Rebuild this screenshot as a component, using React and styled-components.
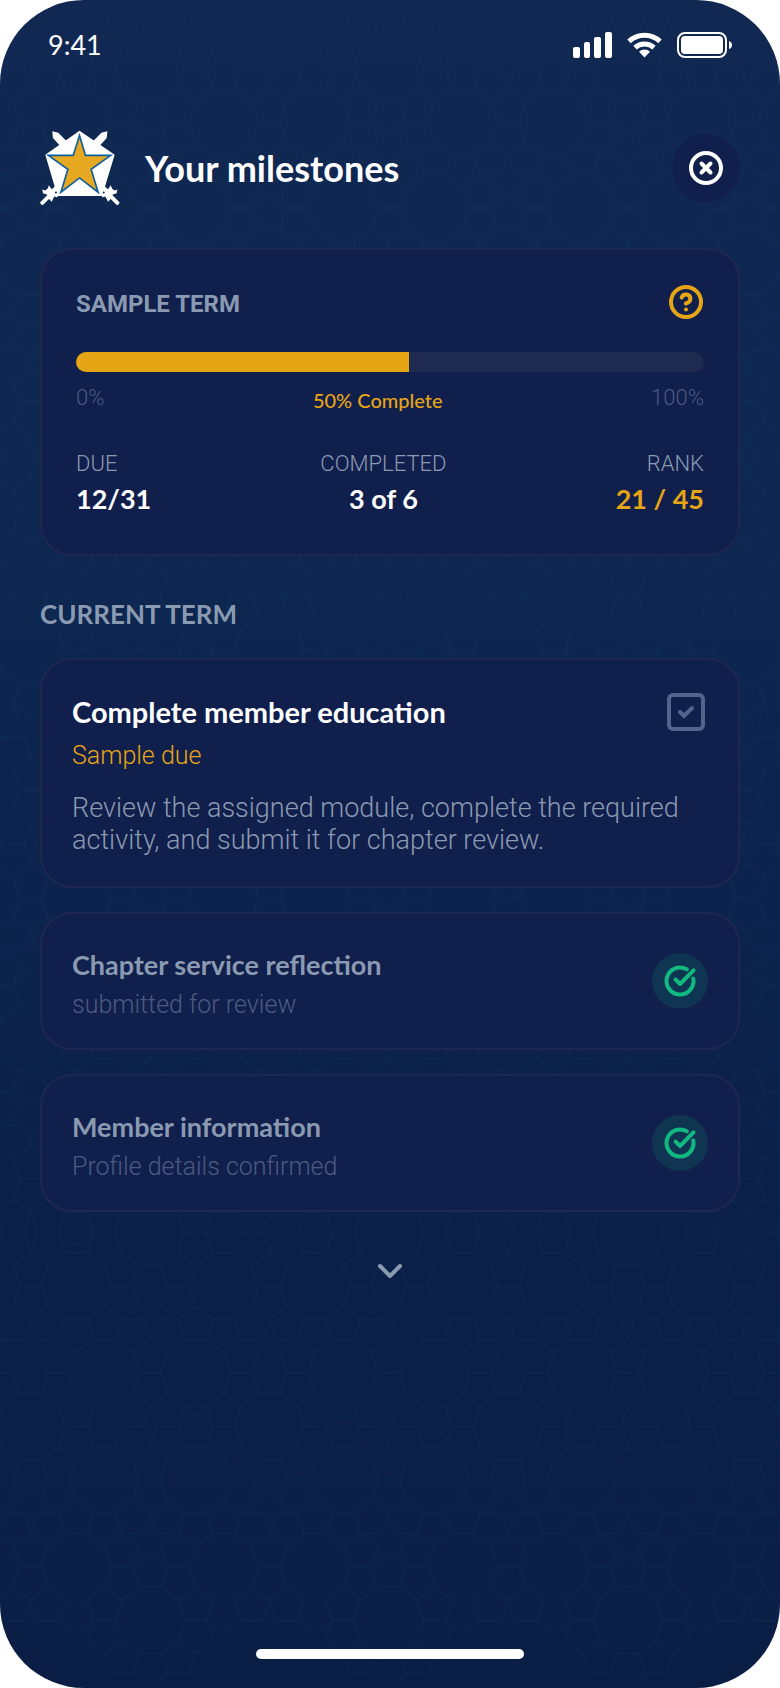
import React from 'react'
import styled, { createGlobalStyle } from 'styled-components'
import { CircleX, CircleHelp } from 'lucide-react'

const GlobalStyle = createGlobalStyle`
  * {
    box-sizing: border-box;
  }
  body {
    margin: 0;
    background-color: #ffffff;
  }
  h1, h2, h3, p, dl, dd, ul {
    margin: 0;
    padding: 0;
  }
`

const heading = "Lato, 'Liberation Sans', sans-serif"
const body = "Roboto, 'Liberation Sans', sans-serif"

const Screen = styled.div`
  position: relative;
  display: flex;
  flex-direction: column;
  min-height: 100vh;
  overflow: hidden;
  border-radius: 84px;
  background: linear-gradient(#102852, #0d2750 35%, #0b2049 72%, #0a1e45);
  color: #ffffff;
  font-family: ${heading};
`

const Backdrop = styled.svg`
  position: absolute;
  inset: 0;
  width: 100%;
  height: 100%;
`

const Content = styled.div`
  position: relative;
  flex: 1;
  display: flex;
  flex-direction: column;
`

const StatusBar = styled.div`
  display: flex;
  align-items: center;
  justify-content: space-between;
  height: 90px;
  padding: 0 48px;
`

const Time = styled.span`
  font-size: 27px;
  line-height: 32px;
`

const StatusIcons = styled.div`
  display: flex;
  align-items: center;
  gap: 15px;
`

const Header = styled.header`
  display: flex;
  align-items: center;
  gap: 25px;
  padding: 40px 40px 42px;
`

const Title = styled.h1`
  flex: 1;
  font-size: 36px;
  line-height: 48px;
  font-weight: 700;
`

const CloseButton = styled.button`
  display: flex;
  align-items: center;
  justify-content: center;
  width: 68px;
  height: 68px;
  padding: 0;
  border: none;
  border-radius: 50%;
  background-color: #111f4d;
  color: #ffffff;
`

const IconButton = styled.button`
  display: flex;
  padding: 0;
  border: none;
  background: none;
  color: ${props => props.$color};
`

const Main = styled.main`
  display: flex;
  flex-direction: column;
  padding: 0 40px;
`

const Card = styled.section`
  border: 2px solid #1e284f;
  border-radius: 32px;
  background-color: #111f4d;
`

const TermCard = styled(Card)`
  padding: 34px 34px 36px;
`

const TermHead = styled.div`
  display: flex;
  align-items: flex-start;
  justify-content: space-between;
`

const TermName = styled.h2`
  font-family: ${body};
  font-size: 24px;
  line-height: 40px;
  font-weight: 700;
  color: #8a9ab1;
`

const Track = styled.div`
  height: 20px;
  margin-top: 28px;
  overflow: hidden;
  border-radius: 10px;
  background-color: #1f2a50;
`

const Fill = styled.div`
  height: 100%;
  background-color: #e6a515;
`

const Scale = styled.div`
  display: flex;
  justify-content: space-between;
  margin-top: 12px;
  font-family: ${body};
  font-size: 22px;
  line-height: 28px;
  font-weight: 300;
  color: #4b5b80;
`

const Percent = styled.strong`
  padding-top: 2px;
  font-family: ${heading};
  font-size: 20px;
  font-weight: 500;
  color: #e6a515;
`

const Stats = styled.dl`
  display: flex;
  justify-content: space-between;
  margin-top: 34px;
`

const Stat = styled.div`
  display: flex;
  flex-direction: column;
  text-align: ${props => props.$align};
`

const StatLabel = styled.dt`
  font-family: ${body};
  font-size: 22px;
  line-height: 32px;
  font-weight: 300;
  color: #8a9ab1;
`

const StatValue = styled.dd`
  font-size: 27px;
  line-height: 38px;
  font-weight: 700;
  color: ${props => props.$color || '#ffffff'};
`

const SectionTitle = styled.h2`
  margin: 41px 0 27px;
  font-size: 26px;
  line-height: 34px;
  font-weight: 700;
  color: #8a9ab1;
`

const List = styled.ul`
  display: flex;
  flex-direction: column;
  gap: 24px;
  list-style: none;
`

const CurrentCard = styled(Card)`
  padding: 33px 33px 30px 30px;
`

const DoneCard = styled(Card)`
  display: flex;
  align-items: center;
  justify-content: space-between;
  height: 138px;
  padding: 0 30px;
`

const DoneText = styled.div`
  padding-top: 4px;
`

const CardHead = styled.div`
  display: flex;
  align-items: flex-start;
  justify-content: space-between;
  margin-bottom: 7px;
`

const TaskTitle = styled.h3`
  font-size: ${props => (props.$done ? 27 : 29)}px;
  line-height: ${props => (props.$done ? 44 : 38)}px;
  font-weight: 700;
  color: ${props => (props.$done ? '#8a9ab1' : '#ffffff')};
`

const TaskNote = styled.p`
  font-family: ${body};
  font-size: 25px;
  line-height: 36px;
  font-weight: 300;
  color: ${props => (props.$done ? '#4b5b80' : '#e6a515')};
`

const TaskText = styled.p`
  margin-top: 18px;
  font-family: ${body};
  font-size: 27px;
  line-height: 32px;
  font-weight: 300;
  color: #8a9ab1;
`

const Tick = styled.label`
  display: grid;
  place-items: center;
  svg {
    grid-area: 1 / 1;
    pointer-events: none;
  }
`

const TickBox = styled.input`
  grid-area: 1 / 1;
  appearance: none;
  width: 38px;
  height: 38px;
  margin: 0;
  border: 4px solid #53648a;
  border-radius: 6px;
`

const DoneBadge = styled.span`
  display: flex;
  align-items: center;
  justify-content: center;
  width: 56px;
  height: 56px;
  border-radius: 50%;
  background-color: #103552;
`

const MoreButton = styled(IconButton)`
  align-self: center;
  margin-top: 50px;
`

const HomeIndicator = styled.div`
  width: 268px;
  height: 10px;
  margin: auto auto 29px;
  border-radius: 5px;
  background-color: #ffffff;
`

// tiling: every decagon carries a ring of ten pentagons,
// neighbouring decagons are joined by one edge
const DIST = 91.25
const EDGE = DIST / 4.236
const TILE_W = DIST * 2.618
const STEP = DIST * Math.sin(Math.PI / 5)
const GAP = DIST * Math.sin((2 * Math.PI) / 5)
const SIDE = DIST * Math.cos(Math.PI / 5)

const ringPath = (() => {
  const r = EDGE * 1.618
  const mid = r * Math.cos(Math.PI / 10)
  const apex = mid + EDGE * 1.5388
  const shoulder = mid + EDGE * 0.9511
  const wing = EDGE * 0.809
  const at = (dist, side, angle) => {
    const x = dist * Math.cos(angle) - side * Math.sin(angle)
    const y = dist * Math.sin(angle) + side * Math.cos(angle)
    return `${x.toFixed(2)} ${y.toFixed(2)}`
  }
  let d = ''
  for (let i = 0; i < 10; i++) {
    const a = ((18 + 36 * i) * Math.PI) / 180
    const h = EDGE / 2
    d += `M${at(mid, -h, a)}L${at(mid, h, a)}L${at(shoulder, wing, a)}L${at(apex, 0, a)}L${at(shoulder, -wing, a)}`
  }
  return d
})()

const centers = (() => {
  const half = 2 * STEP + GAP
  const list = []
  for (let n = 0; n <= 8; n++) {
    const y = n * half
    const x = n % 2 ? TILE_W / 2 : 0
    list.push([x, y])
    if (n > 0) list.push([x - SIDE, y - STEP], [x + SIDE, y - STEP])
    if (n < 8) list.push([x - SIDE, y + STEP], [x + SIDE, y + STEP])
  }
  return list.flatMap(([x, y]) => [-1, 0, 1].map(k => [x + k * TILE_W, y]))
})()

const Pattern = () => (
  <Backdrop aria-hidden="true">
    <defs>
      <path id="ring" d={ringPath} />
      <pattern id="tiles" x="150" width={TILE_W} height="1700" patternUnits="userSpaceOnUse">
        <g fill="none" stroke="#11456c" strokeWidth="1.5">
          {centers.map(([x, y]) => (
            <use key={`${x} ${y}`} href="#ring" x={x} y={y + 68} />
          ))}
        </g>
      </pattern>
    </defs>
    <rect width="100%" height="100%" fill="url(#tiles)" opacity="0.15" />
  </Backdrop>
)

const Sword = props => (
  <g fill="#ffffff" {...props}>
    <path d="M52 33L70 38L96 64L78 80L54 54Z" />
    <path d="M22 209L31 212L38 206L42 196L50 208L62 198L72 226L66 232L58 230L50 246L43 238L36 224L24 220Z" />
    <path d="M22 249L46 225" stroke="#ffffff" strokeWidth="12" strokeLinecap="round" />
    <circle cx="63" cy="218" r="3" fill="#102852" />
  </g>
)

const Logo = () => (
  <svg width="80" height="76" viewBox="15 30 241 228" role="img" aria-label="Chapter crest">
    <path d="M134 32L240 104L212 196L204 228H66L58 196L31 104Z" fill="#ffffff" />
    <Sword />
    <Sword transform="translate(270 0) scale(-1 1)" />
    <path
      d="M134 46L152 106H228L169 148L190 217L134 174L78 217L99 148L40 106H115Z"
      fill="#e7a822"
      stroke="#0b5f9d"
      strokeWidth="5"
    />
  </svg>
)

const Signal = () => (
  <svg width="39" height="26" fill="#ffffff">
    <rect x="0" y="15" width="7" height="11" rx="2" />
    <rect x="11" y="10" width="6" height="16" rx="2" />
    <rect x="21" y="5" width="7" height="21" rx="2" />
    <rect x="32" y="0" width="7" height="26" rx="2" />
  </svg>
)

const Wifi = () => (
  <svg width="35" height="26" viewBox="0 0 35 26">
    <g fill="none" stroke="#ffffff" strokeWidth="5">
      <path d="M2 9.4A22.5 22.5 0 0 1 33 9.4" />
      <path d="M8 15.6A14 14 0 0 1 27 15.6" />
    </g>
    <path d="M17.5 25.5L12 19.8A8 8 0 0 1 23 19.8Z" fill="#ffffff" />
  </svg>
)

const Battery = () => (
  <svg width="55" height="26" fill="none">
    <rect x="1" y="1" width="48" height="24" rx="7" stroke="#ffffff" strokeWidth="2" />
    <rect x="4" y="4" width="42" height="18" rx="4" fill="#ffffff" />
    <path d="M52 9Q55 10 55 13T52 17Z" fill="#ffffff" />
  </svg>
)

const DoneIcon = () => (
  <svg
    width="32"
    height="32"
    viewBox="-16 -16 32 32"
    fill="none"
    stroke="#11b981"
    strokeWidth="4"
    strokeLinecap="round"
    strokeLinejoin="round"
    role="img"
    aria-label="Done"
  >
    <path d="M6.8 -11.7A13.5 13.5 0 1 0 13.3 -2.5" />
    <path d="M-4.3 -1.3L0 3L13.5 -10.7" />
  </svg>
)

const doneTasks = [
  { id: 1, title: 'Chapter service reflection', note: 'submitted for review' },
  { id: 2, title: 'Member information', note: 'Profile details confirmed' },
]

const progress = 53

const App = () => {
  return (
    <Screen>
      <GlobalStyle />
      <Pattern />
      <Content>
        <StatusBar>
          <Time>9:41</Time>
          <StatusIcons>
            <Signal />
            <Wifi />
            <Battery />
          </StatusIcons>
        </StatusBar>
        <Header>
          <Logo />
          <Title>Your milestones</Title>
          <CloseButton type="button" aria-label="Close">
            <CircleX size={36} strokeWidth={4} absoluteStrokeWidth />
          </CloseButton>
        </Header>
        <Main>
          <TermCard>
            <TermHead>
              <TermName>SAMPLE TERM</TermName>
              <IconButton type="button" aria-label="Help" $color="#e6a515">
                <CircleHelp size={36} strokeWidth={4} absoluteStrokeWidth />
              </IconButton>
            </TermHead>
            <Track>
              <Fill style={{ width: `${progress}%` }} />
            </Track>
            <Scale>
              <span>0%</span>
              <Percent>50% Complete</Percent>
              <span>100%</span>
            </Scale>
            <Stats>
              <Stat $align="left">
                <StatLabel>DUE</StatLabel>
                <StatValue>12/31</StatValue>
              </Stat>
              <Stat $align="center">
                <StatLabel>COMPLETED</StatLabel>
                <StatValue>3 of 6</StatValue>
              </Stat>
              <Stat $align="right">
                <StatLabel>RANK</StatLabel>
                <StatValue $color="#e6a515">21 / 45</StatValue>
              </Stat>
            </Stats>
          </TermCard>
          <SectionTitle>CURRENT TERM</SectionTitle>
          <List>
            <CurrentCard as="li">
              <CardHead>
                <TaskTitle>Complete member education</TaskTitle>
                <Tick>
                  <TickBox type="checkbox" aria-label="Complete member education" />
                  <svg width="20" height="20" viewBox="-10 -10 20 20" fill="none" stroke="#53648a" strokeWidth="4">
                    <path d="M-6 0L-2 4L6 -4" strokeLinecap="round" />
                  </svg>
                </Tick>
              </CardHead>
              <TaskNote>Sample due</TaskNote>
              <TaskText>
                Review the assigned module, complete the required activity, and submit it for chapter review.
              </TaskText>
            </CurrentCard>
            {doneTasks.map(task => (
              <DoneCard as="li" key={task.id}>
                <DoneText>
                  <TaskTitle $done>{task.title}</TaskTitle>
                  <TaskNote $done>{task.note}</TaskNote>
                </DoneText>
                <DoneBadge>
                  <DoneIcon />
                </DoneBadge>
              </DoneCard>
            ))}
          </List>
          <MoreButton type="button" aria-label="Show more" $color="#8a9ab1">
            <svg width="26" height="18" fill="none" stroke="currentColor" strokeWidth="4" strokeLinecap="round">
              <path d="M3 4L13 14L23 4" strokeLinejoin="round" />
            </svg>
          </MoreButton>
        </Main>
        <HomeIndicator />
      </Content>
    </Screen>
  )
}

export default App
